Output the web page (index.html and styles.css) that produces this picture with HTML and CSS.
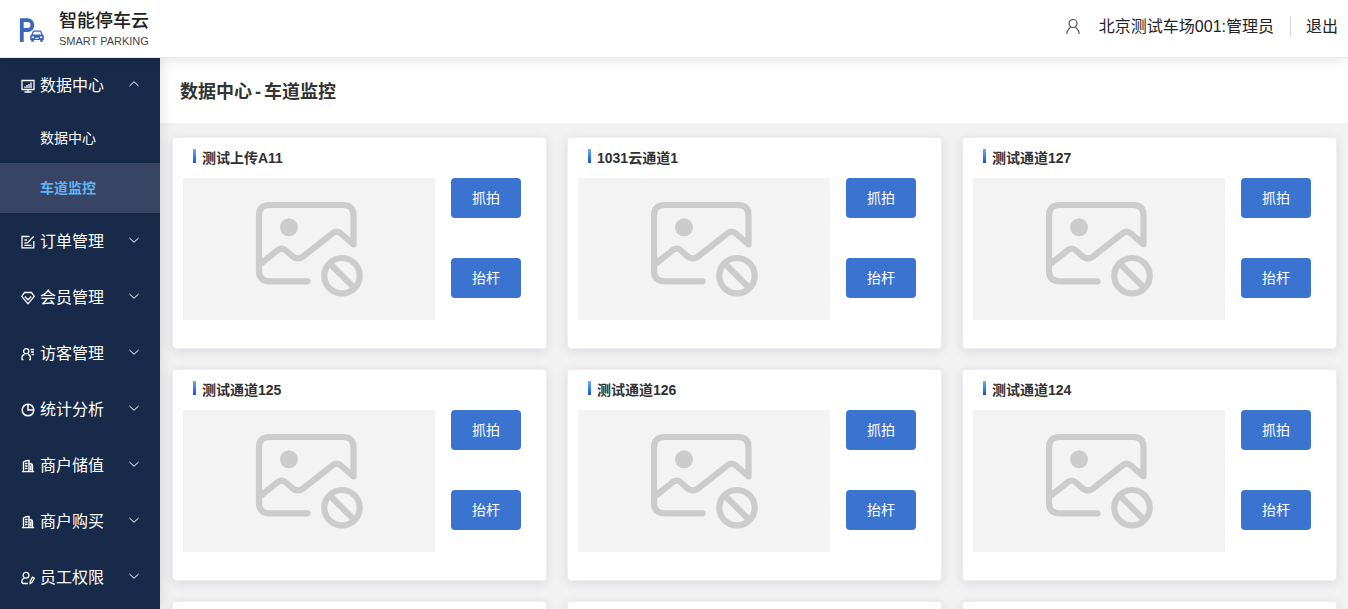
FILE: index.html
```html
<!DOCTYPE html>
<html lang="zh-CN">
<head>
    <meta charset="UTF-8">
    <meta name="viewport" content="width=device-width, initial-scale=1.0">
    <title>智能停车云</title>
    <link rel="stylesheet" href="styles.css">
</head>
<body>
    <svg class="sprite" aria-hidden="true">
        <symbol id="arrow" viewBox="0 0 12 12">
            <path d="M1.500 4 6 8.300 10.500 4" fill="none" stroke="currentColor" stroke-width="1"/>
        </symbol>
        <symbol id="building" viewBox="0 0 14 14">
            <path d="M2.500 12V3Q4 1.500 8 1.500V12M8 4.500Q11.500 4.500 11.500 7V12M.8 12.600h12.400M4 4.500h2.500M4 7h2.500M4 9.500h2.500M9.800 6.500v5" fill="none" stroke="currentColor" stroke-width="1.400"/>
        </symbol>
        <symbol id="no-image" viewBox="0 0 112 100">
            <g fill="none" stroke="#ccc" stroke-width="6.200" stroke-linecap="round" stroke-linejoin="round">
                <path d="M54.500 82.300H16.500Q6 82.300 6 72V16.500Q6 6 16.500 6H90Q100.500 6 100.500 16.500V45.500L88 34.500Q84 31 80 34L50 57.500Q44.500 61.500 39 57L33 51.500Q29 48 25 51L6 66"/>
                <circle cx="89" cy="76.700" r="17.700"/>
                <path d="M77 64.700 101 88.700" stroke-linecap="butt"/>
            </g>
            <circle cx="36" cy="28.300" r="9" fill="#ccc"/>
        </symbol>
    </svg>

    <header class="header">
        <a class="logo" href="#">
            <svg class="logo-mark" viewBox="0 0 26 28" aria-hidden="true">
                <path d="M2.800 27V5.200H8.500a4.900 4.900 0 0 1 0 9.800H3" fill="none" stroke="#3a66bd" stroke-width="3.800"/>
                <path d="M14 15.500h8l1.600 4 1.200 1v4.500h-1v1.800h-2.600v-1.800h-6.400v1.800h-2.600v-1.800h-1v-4.500l1.200-1z" fill="#3a66bd"/>
                <path d="M14.800 16.800h6.400l1 2.700h-8.400zM12.800 21.600h2.200v1.300h-2.200zM21 21.600h2.200v1.300h-2.200zM16.300 22.800h3.400v.9h-3.400z" fill="#fff"/>
            </svg>
            <span class="logo-text">
                <strong class="logo-name">智能停车云</strong>
                <span class="logo-sub">SMART PARKING</span>
            </span>
        </a>
        <div class="user">
            <svg class="user-icon" viewBox="0 0 16 16" fill="none" stroke="#555" stroke-width="1.200" aria-hidden="true">
                <circle cx="8" cy="4.500" r="4"/>
                <path d="M1.800 15C2.200 11 4.300 9.200 6 8.100M14.200 15C13.800 11 11.700 9.200 10 8.100"/>
            </svg>
            <span class="user-name">北京测试车场001:管理员</span>
            <a class="logout" href="#">退出</a>
        </div>
    </header>

    <div class="layout">
        <nav class="sidebar">
            <button class="menu-item open">
                <svg class="menu-icon" viewBox="0 0 14 14" fill="none" stroke="currentColor" stroke-width="1.300"><path d="M1 1.500h12v9H1zM3.500 13h7M7 10.500V13M4 9V7.500M6 9V6M8 9V5M10 9V3.500"/></svg>
                <span>数据中心</span>
                <svg class="arrow"><use href="#arrow"/></svg>
            </button>
            <a class="sub-item" href="#">数据中心</a>
            <a class="sub-item active" href="#">车道监控</a>
            <button class="menu-item">
                <svg class="menu-icon" viewBox="0 0 14 14" fill="none" stroke="currentColor" stroke-width="1.300"><path d="M8.500 1.500H1v11.300h11.800V6M12.800 1.200 7 7.200 5.800 8.200M3.500 5h2.500M3.500 8h2M3.500 10.300h7"/></svg>
                <span>订单管理</span>
                <svg class="arrow"><use href="#arrow"/></svg>
            </button>
            <button class="menu-item">
                <svg class="menu-icon" viewBox="0 0 14 14" fill="none" stroke="currentColor" stroke-width="1.300"><path d="M3.500 1.500h7L13.200 5.500 7 12.800.8 5.500zM3.800 5.500 7 8.800l3.200-3.300"/></svg>
                <span>会员管理</span>
                <svg class="arrow"><use href="#arrow"/></svg>
            </button>
            <button class="menu-item">
                <svg class="menu-icon" viewBox="0 0 14 14" fill="none" stroke="currentColor" stroke-width="1.300"><circle cx="5.200" cy="4.300" r="2.600"/><path d="M1 13v-2.500Q1 8 3.500 7.500M7 7.500Q9.300 8 9.300 10.500V13M.5 12.700h2M8 12.700h2M9.500 2.500H13M10 5h3M10.500 7.500H13"/></svg>
                <span>访客管理</span>
                <svg class="arrow"><use href="#arrow"/></svg>
            </button>
            <button class="menu-item">
                <svg class="menu-icon" viewBox="0 0 14 14" fill="none" stroke="currentColor" stroke-width="1.500"><circle cx="7" cy="7" r="5.800"/><path d="M7 1.200V7h5.800"/></svg>
                <span>统计分析</span>
                <svg class="arrow"><use href="#arrow"/></svg>
            </button>
            <button class="menu-item">
                <svg class="menu-icon"><use href="#building"/></svg>
                <span>商户储值</span>
                <svg class="arrow"><use href="#arrow"/></svg>
            </button>
            <button class="menu-item">
                <svg class="menu-icon"><use href="#building"/></svg>
                <span>商户购买</span>
                <svg class="arrow"><use href="#arrow"/></svg>
            </button>
            <button class="menu-item">
                <svg class="menu-icon" viewBox="0 0 14 14" fill="none" stroke="currentColor" stroke-width="1.300"><circle cx="5" cy="4.200" r="2.900"/><path d="M3.500 7Q.8 8 .8 10.500q0 2 2 2H7M9.200 12.500V10.200l2.300-4 1.800 1-2.300 4z"/></svg>
                <span>员工权限</span>
                <svg class="arrow"><use href="#arrow"/></svg>
            </button>
        </nav>

        <main class="main">
            <h1 class="page-title"><span>数据中心</span><span>-</span><span>车道监控</span></h1>
            <div class="lanes">
                <section class="card">
                    <h2 class="card-title">测试上传A11</h2>
                    <div class="card-body">
                        <div class="snapshot"><svg class="no-image"><use href="#no-image"/></svg></div>
                        <div class="actions">
                            <button class="btn">抓拍</button>
                            <button class="btn">抬杆</button>
                        </div>
                    </div>
                </section>
                <section class="card">
                    <h2 class="card-title">1031云通道1</h2>
                    <div class="card-body">
                        <div class="snapshot"><svg class="no-image"><use href="#no-image"/></svg></div>
                        <div class="actions">
                            <button class="btn">抓拍</button>
                            <button class="btn">抬杆</button>
                        </div>
                    </div>
                </section>
                <section class="card">
                    <h2 class="card-title">测试通道127</h2>
                    <div class="card-body">
                        <div class="snapshot"><svg class="no-image"><use href="#no-image"/></svg></div>
                        <div class="actions">
                            <button class="btn">抓拍</button>
                            <button class="btn">抬杆</button>
                        </div>
                    </div>
                </section>
                <section class="card">
                    <h2 class="card-title">测试通道125</h2>
                    <div class="card-body">
                        <div class="snapshot"><svg class="no-image"><use href="#no-image"/></svg></div>
                        <div class="actions">
                            <button class="btn">抓拍</button>
                            <button class="btn">抬杆</button>
                        </div>
                    </div>
                </section>
                <section class="card">
                    <h2 class="card-title">测试通道126</h2>
                    <div class="card-body">
                        <div class="snapshot"><svg class="no-image"><use href="#no-image"/></svg></div>
                        <div class="actions">
                            <button class="btn">抓拍</button>
                            <button class="btn">抬杆</button>
                        </div>
                    </div>
                </section>
                <section class="card">
                    <h2 class="card-title">测试通道124</h2>
                    <div class="card-body">
                        <div class="snapshot"><svg class="no-image"><use href="#no-image"/></svg></div>
                        <div class="actions">
                            <button class="btn">抓拍</button>
                            <button class="btn">抬杆</button>
                        </div>
                    </div>
                </section>
                <section class="card"></section>
                <section class="card"></section>
                <section class="card"></section>
            </div>
        </main>
    </div>
</body>
</html>
```

FILE: styles.css
```css
* {
    box-sizing: border-box;
}
body {
    display: flex;
    flex-direction: column;
    height: 100vh;
    margin: 0;
    overflow: hidden;
    background-color: #f2f2f2;
    color: #303133;
    font-family: "Liberation Sans", "Noto Sans CJK SC", sans-serif;
    font-size: 14px;
}
a {
    color: inherit;
    text-decoration: none;
}
button {
    border: 0;
    font-family: inherit;
    cursor: pointer;
}
.sprite {
    display: none;
}

/* header */
.header {
    position: relative;
    z-index: 3;
    display: flex;
    flex: none;
    justify-content: space-between;
    align-items: center;
    height: 58px;
    margin-bottom: -1px;
    padding: 0 10px 0 19px;
    border-bottom: 1px solid #ebebee;
    background-color: #fff;
    box-shadow: 0 2px 12px rgba(0, 0, 0, 0.1);
}
.logo {
    display: flex;
    align-items: center;
    gap: 14px;
}
.logo-mark {
    width: 26px;
    height: 28px;
}
.logo-text {
    display: flex;
    flex-direction: column;
    color: #222;
}
.logo-name {
    font-size: 18px;
    font-weight: 500;
    line-height: 24px;
}
.logo-sub {
    color: #444;
    font-size: 11px;
    line-height: 16px;
}
.user {
    display: flex;
    align-items: center;
    color: #222;
    font-size: 16px;
    line-height: 22px;
    padding-bottom: 4px;
}
.user-icon {
    width: 16px;
    height: 16px;
    margin-right: 18px;
}
.logout {
    margin-left: 16px;
    padding-left: 15px;
    border-left: 1px solid #dcdcdc;
}

/* sidebar */
.layout {
    display: flex;
    flex: 1;
    min-height: 0;
}
.sidebar {
    position: relative;
    z-index: 2;
    flex: none;
    width: 160px;
    overflow: hidden;
    background-color: #172a4a;
    color: #fff;
    box-shadow: 2px 0 12px rgba(0, 0, 0, 0.1);
}
.menu-item {
    display: flex;
    align-items: center;
    width: 100%;
    height: 56px;
    padding: 0 20px 2px 21px;
    background: none;
    color: #fff;
    font-size: 16px;
    text-align: left;
}
.menu-icon {
    width: 14px;
    height: 14px;
    margin: 4px 5px 0 0;
}
.arrow {
    width: 12px;
    height: 12px;
    margin-left: auto;
}
.open .arrow {
    transform: rotate(180deg);
}
.sub-item {
    display: block;
    padding-left: 40px;
    line-height: 50px;
}
.sub-item.active {
    background-color: #374463;
    color: #5eb3f9;
    font-weight: bold;
}

/* content */
.main {
    flex: 1;
    min-width: 0;
    overflow: hidden;
}
.page-title {
    display: flex;
    gap: 3px;
    margin: 0;
    padding: 4px 20px 0;
    background-color: #fff;
    color: #333;
    font-size: 18px;
    line-height: 62px;
}
.lanes {
    display: grid;
    grid-template-columns: repeat(3, 1fr);
    gap: 20px;
    padding: 14px 11px 14px 12px;
}
.card {
    min-height: 212px;
    padding: 10px 25px 28px 10px;
    border: 1px solid #ebeef5;
    border-radius: 4px;
    background-color: #fff;
    box-shadow: 0 2px 12px rgba(0, 0, 0, 0.1);
}
.card-title {
    display: flex;
    align-items: flex-start;
    gap: 6px;
    margin: 0 0 10px;
    padding-left: 10px;
    font-size: 14px;
    line-height: 20px;
}
.card-title::before {
    content: "";
    width: 3px;
    height: 14px;
    margin-top: 1px;
    background: linear-gradient(#61b3fa, #1551d8);
}
.card-body {
    display: flex;
    gap: 16px;
}
.snapshot {
    display: flex;
    flex: 1;
    justify-content: center;
    align-items: center;
    height: 142px;
    background-color: #f3f3f3;
}
.no-image {
    width: 112px;
    height: 100px;
}
.actions {
    display: flex;
    flex-direction: column;
    gap: 40px;
}
.btn {
    width: 70px;
    height: 40px;
    padding: 0 0 2px;
    border-radius: 4px;
    background-color: #3b74d0;
    color: #fff;
    font-size: 14px;
}
```
